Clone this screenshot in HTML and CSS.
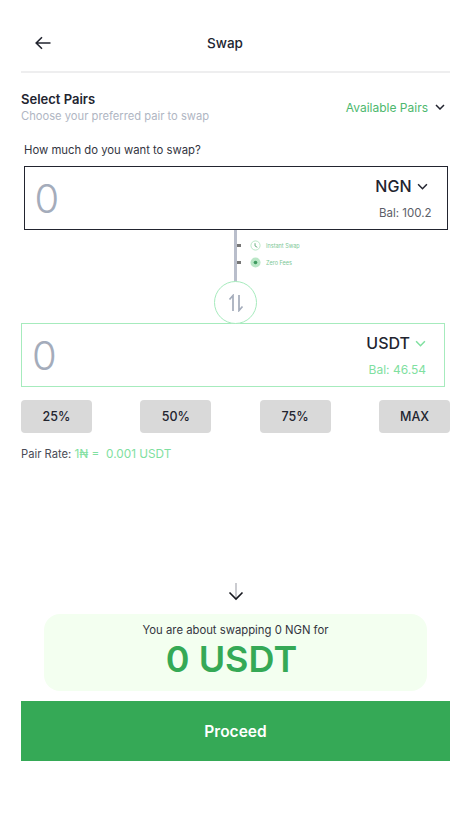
FILE: index.html
```html
<!DOCTYPE html>
<html lang="en">
<head>
<meta charset="utf-8">
<title>Swap</title>
<link rel="stylesheet" href="styles.css">
</head>
<body>
<main class="page">
  <header class="topbar">
    <svg class="back" viewBox="0 0 16 14" width="16" height="14"><path d="M15.5 7H1.5M7 1.2 1.2 7 7 12.8" fill="none" stroke="#22242f" stroke-width="1.6"/></svg>
    <h1 class="title">Swap</h1>
  </header>
  <section class="pairs">
    <div>
      <h2 class="pairs-title">Select Pairs</h2>
      <p class="pairs-sub">Choose your preferred pair to swap</p>
    </div>
    <div class="available">Available Pairs
      <svg viewBox="0 0 10 6" width="10" height="6"><path d="M1 1 5 5 9 1" fill="none" stroke="#22242f" stroke-width="1.5"/></svg>
    </div>
  </section>
  <p class="question">How much do you want to swap?</p>
  <div class="amount amount-from">
    <span class="value">0</span>
    <div class="side">
      <div class="currency">NGN <svg viewBox="0 0 10 6" width="11" height="7"><path d="M1 1 5 5 9 1" fill="none" stroke="#22242f" stroke-width="1.4"/></svg></div>
      <div class="bal">Bal: 100.2</div>
    </div>
  </div>
  <div class="link">
    <div class="rail"></div>
    <ul class="notes">
      <li class="note"><span class="tick"></span><svg viewBox="0 0 12 12" width="11" height="11"><circle cx="6" cy="6" r="5" fill="none" stroke="#b5e6c3" stroke-width="1"/><path d="M5.500 3.500V6.500L8 8" fill="none" stroke="#4d9d68" stroke-width=".9"/></svg>Instant Swap</li>
      <li class="note"><span class="tick"></span><svg viewBox="0 0 12 12" width="11" height="11"><circle cx="6" cy="6" r="5.500" fill="#b9e6c6"/><circle cx="6" cy="6" r="2" fill="#3f9a60"/></svg>Zero Fees</li>
    </ul>
  </div>
  <div class="switch">
    <svg viewBox="0 0 16 18" width="16" height="18"><path d="M5 17V1.500L1.500 5.500M11 1V16.500L14.500 12.500" fill="none" stroke="#a4acbb" stroke-width="1.7"/></svg>
  </div>
  <div class="amount amount-to">
    <span class="value">0</span>
    <div class="side side-to">
      <div class="currency">USDT <svg viewBox="0 0 10 6" width="11" height="7"><path d="M1 1 5 5 9 1" fill="none" stroke="#7fe0a0" stroke-width="1.4"/></svg></div>
      <div class="bal bal-green">Bal: 46.54</div>
    </div>
  </div>
  <div class="percents">
    <button class="percent">25%</button>
    <button class="percent">50%</button>
    <button class="percent">75%</button>
    <button class="percent">MAX</button>
  </div>
  <p class="rate">Pair Rate: <span class="rate-green">1₦ =&nbsp; 0.001 USDT</span></p>
  <div class="down">
    <svg viewBox="0 0 16 18" width="16" height="18"><path d="M8 0V15" stroke="#b5b7bd" stroke-width="1.4" fill="none"/><path d="M1.500 9.500 8 16 14.500 9.500" stroke="#16181f" stroke-width="1.6" fill="none"/></svg>
  </div>
  <section class="summary">
    <p class="summary-text">You are about swapping 0 NGN for</p>
    <p class="summary-value">0 USDT</p>
  </section>
  <button class="proceed">Proceed</button>
</main>
</body>
</html>
```
FILE: styles.css
```css
* { box-sizing: border-box; }
html, body { margin: 0; padding: 0; background: #fff; }
body { font-family: Inter, "Liberation Sans", sans-serif; color: #22242f; }
p, h1, h2, ul { margin: 0; padding: 0; }
.page { width: 471px; height: 825px; padding: 0 21px; overflow: hidden; }

.topbar { position: relative; height: 73px; border-bottom: 2px solid #eeeeef; display: flex; align-items: center; justify-content: center; padding-top: 15px; }
.back { position: absolute; left: 14px; top: 36px; }
.title { font-size: 13.5px; font-weight: 500; line-height: 16px; margin-left: -21px; }

.pairs { display: flex; justify-content: space-between; align-items: center; margin-top: 18px; padding-right: 5px; }
.pairs-title { font-size: 13px; font-weight: 600; line-height: 16px; }
.pairs-sub { font-size: 11.2px; line-height: 14px; margin-top: 2px; color: #b0b6c3; }
.available { display: flex; align-items: center; gap: 7px; font-size: 12px; color: #4db86e; }

.question { font-size: 11.3px; line-height: 14px; margin: 20px 0 0 3px; color: #33353f; }

.amount { width: 424px; height: 64px; display: flex; justify-content: space-between; }
.amount-from { margin: 9px 0 0 2.500px; border: 1px solid #22242f; padding: 0 15px 0 10px; }
.amount-to { border: 1.5px solid #a6ebbd; padding: 0 18px 0 10px; margin-top: -1px; }
.value { font-size: 40px; line-height: 64px; color: #a4acbb; font-weight: 300; }
.side { display: flex; flex-direction: column; align-items: flex-end; }
.currency { display: flex; align-items: center; gap: 5px; font-size: 16px; font-weight: 500; line-height: 18px; margin-top: 10px; padding-right: 4px; }
.side-to .currency { padding-right: 0; }
.bal { font-size: 11.5px; line-height: 14px; margin-top: 11px; color: #5b5e68; }
.bal-green { font-size: 12px; color: #7fe0a0; }

.link { display: flex; height: 53px; padding-left: 213px; }
.rail { width: 3px; height: 53px; background: #b9becb; }
.notes { list-style: none; padding-top: 10px; }
.note { display: flex; align-items: center; height: 11px; margin-bottom: 6px; font-size: 5.5px; color: #7cc795; }
.tick { width: 4px; height: 3px; background: #777; margin-right: 9px; }
.note svg { margin-right: 5px; }

.switch { width: 43px; height: 43px; margin: -2px 0 0 193px; border: 1px solid #a6ebbd; border-radius: 50%; background: #fff; display: flex; align-items: center; justify-content: center; position: relative; }

.percents { display: flex; justify-content: space-between; margin-top: 13px; }
.percent { width: 71px; height: 33px; padding: 0; border: 0; border-radius: 4px; background: #d9d9d9; font-family: inherit; font-size: 12.500px; font-weight: 500; color: #22242f; }
.rate { font-size: 11.2px; line-height: 14px; margin-top: 14px; color: #4a4c56; }
.rate-green { font-size: 11.8px; color: #7fe0a0; }

.down { height: 18px; margin-top: 122px; display: flex; justify-content: center; }
.summary { width: 383px; height: 77px; margin: 13px 0 0 23px; border-radius: 16px; background: #f3fff0; text-align: center; padding-top: 9px; }
.summary-text { font-size: 11.3px; line-height: 14px; color: #33353f; }
.summary-value { font-size: 36px; font-weight: 600; line-height: 42px; color: #35a956; margin-top: 1px; padding-right: 8px; }
.proceed { display: block; width: 429px; height: 60px; margin-top: 10px; border: 0; background: #35a956; color: #fff; font-family: inherit; font-size: 15.5px; font-weight: 600; }
```
